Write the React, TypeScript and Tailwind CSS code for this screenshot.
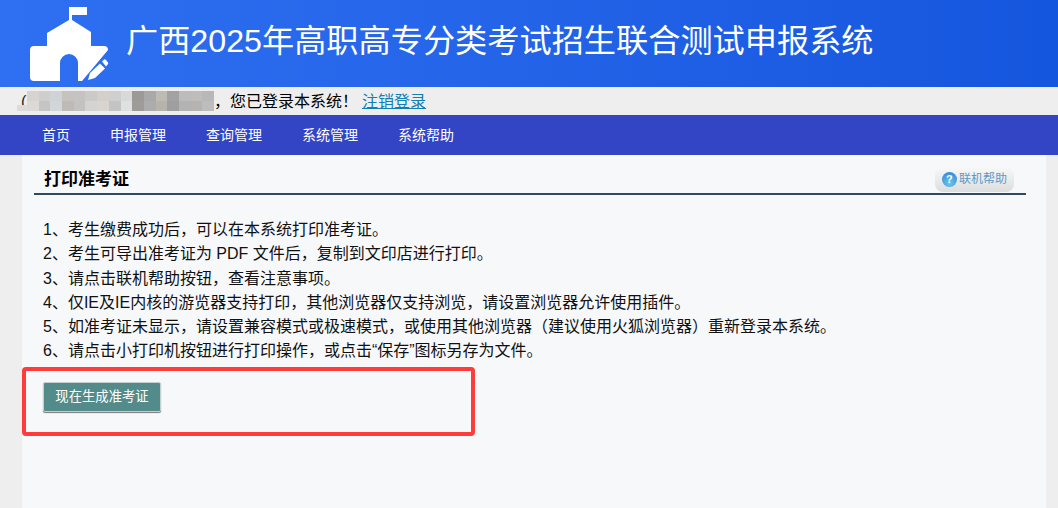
const cjk = { fontFamily: '"Liberation Sans","Noto Sans CJK SC",sans-serif' };

const mosaicTop = ['#d6d3d0','#cfcecd','#cfd3d6','#c6c2bf','#c4c3c2','#cbcac9','#d3cfca','#cfcfd0','#d8d9da','#9c9a97','#aaa9aa','#bdbbb3','#a3a2a3','#bcbcbc','#bfbdba','#b8b8b8'];
const mosaicBottom = ['#dcd9d6','#c6c5c4','#d3d6d8','#c0bab7','#c2c2c2','#d4d3d2','#d8d5d0','#c4c4c5','#dfe0e0','#9e9c99','#adacad','#b5b3aa','#9f9ea0','#b3b3b3','#b5b4b2','#bdbdbd'];

function Logo() {
  return (
    <svg width="82" height="75" viewBox="30 7 82 75" className="shrink-0">
      <path
        fill="#fff"
        d="M69 7H87V15H72V20L91 32V46H104Q108 46 108 50L82 81H78V63A9 9 0 0 0 60 63V81H34Q30 81 30 77V50Q30 46 34 46H47V33L69 20Z"
      />
      <path fill="#fff" d="M88 80 90 73 100 63.500 105 68.500 95 78Z" />
      <path fill="#fff" d="M102 61.500 104 59.500Q105 59 106 60L108 62.500Q108.500 63.500 108 64L106 66.500Z" />
    </svg>
  );
}

function HelpIcon() {
  return (
    <span className="flex h-[15px] w-[15px] items-center justify-center rounded-full bg-[radial-gradient(circle_at_50%_75%,#6cc6f2,#2a7fd0)] text-[11px] font-bold leading-none text-white">?</span>
  );
}

const rules = [
  '1、考生缴费成功后，可以在本系统打印准考证。',
  '2、考生可导出准考证为 PDF 文件后，复制到文印店进行打印。',
  '3、请点击联机帮助按钮，查看注意事项。',
  '4、仅IE及IE内核的游览器支持打印，其他浏览器仅支持浏览，请设置浏览器允许使用插件。',
  '5、如准考证未显示，请设置兼容模式或极速模式，或使用其他浏览器（建议使用火狐浏览器）重新登录本系统。',
  '6、请点击小打印机按钮进行打印操作，或点击“保存”图标另存为文件。',
];

const nav = ['首页', '申报管理', '查询管理', '系统管理', '系统帮助'];

export default function App() {
  return (
    <div style={cjk} className="flex h-[508px] w-[1058px] flex-col overflow-hidden bg-[#eeeeee] text-black">
      <header className="flex h-[87px] shrink-0 items-start bg-gradient-to-r from-[#2f70f2] to-[#1556de] pl-[30px]">
        <div className="mt-[7px]"><Logo /></div>
        <h1 className="ml-[14px] mt-[19px] whitespace-nowrap text-[32.200px] leading-[44px] text-white">广西2025年高职高专分类考试招生联合测试申报系统</h1>
      </header>

      <div className="flex h-[28px] shrink-0 items-center pl-[21px] text-[16px] leading-[28px]">
        <span className="w-[6px] pt-[2px] text-[#222222]">(</span>
        <span className="relative flex h-[20px] w-[187px] flex-col">
          <span className="absolute left-[-10px] top-[14px] h-[6px] w-[10px] bg-[#dcdcd8]" />
          <span className="flex h-[10px]">
            {mosaicTop.map((c, i) => <span key={i} className="h-[10px] w-[11.700px]" style={{ backgroundColor: c }} />)}
          </span>
          <span className="flex h-[10px]">
            {mosaicBottom.map((c, i) => <span key={i} className="h-[10px] w-[11.700px]" style={{ backgroundColor: c }} />)}
          </span>
        </span>
        <span className="whitespace-nowrap pt-[2px]">，您已登录本系统！</span>
        <a className="ml-[4px] whitespace-nowrap pt-[2px] text-[#0f7fb5] underline">注销登录</a>
      </div>

      <nav className="flex h-[40px] shrink-0 items-center gap-[40px] bg-[#3344c4] pl-[42px] text-[14px] text-white">
        {nav.map((t) => <span key={t} className="whitespace-nowrap">{t}</span>)}
      </nav>

      <main className="ml-[22px] w-[1024px] flex-1 bg-[#f7f8fa] pl-[12px] pr-[20px]">
        <div className="flex h-[40px] items-center justify-between border-b-2 border-[#304a60] pl-[10px]">
          <h2 className="pt-[12px] text-[17px] font-bold">打印准考证</h2>
          <button className="mr-[12px] mt-[10px] flex h-[25px] w-[79px] items-center justify-center gap-[2px] rounded-[8px] bg-gradient-to-b from-[#f7f8f8] to-[#dcdddd] text-[12px] text-[#5a9bc8]">
            <HelpIcon />联机帮助
          </button>
        </div>

        <div className="mt-[23px] pl-[9px] text-[16px] leading-[24.300px] text-[#111111]">
          {rules.map((r) => <p key={r} className="whitespace-nowrap">{r}</p>)}
        </div>

        <div className="relative mt-[3.600px] h-[66px]">
          <button className="relative left-[9px] top-[15px] h-[30px] w-[118px] rounded-[2px] border border-[#c4d0d0] bg-[#528b89] text-[13.330px] text-white shadow-[0_1px_1px_#777]">现在生成准考证</button>
          <div className="absolute left-[-12px] top-[-0.600px] h-[69px] w-[453px] rounded-[4px] border-[4px] border-[#ff3b3b]" />
        </div>
      </main>
    </div>
  );
}
